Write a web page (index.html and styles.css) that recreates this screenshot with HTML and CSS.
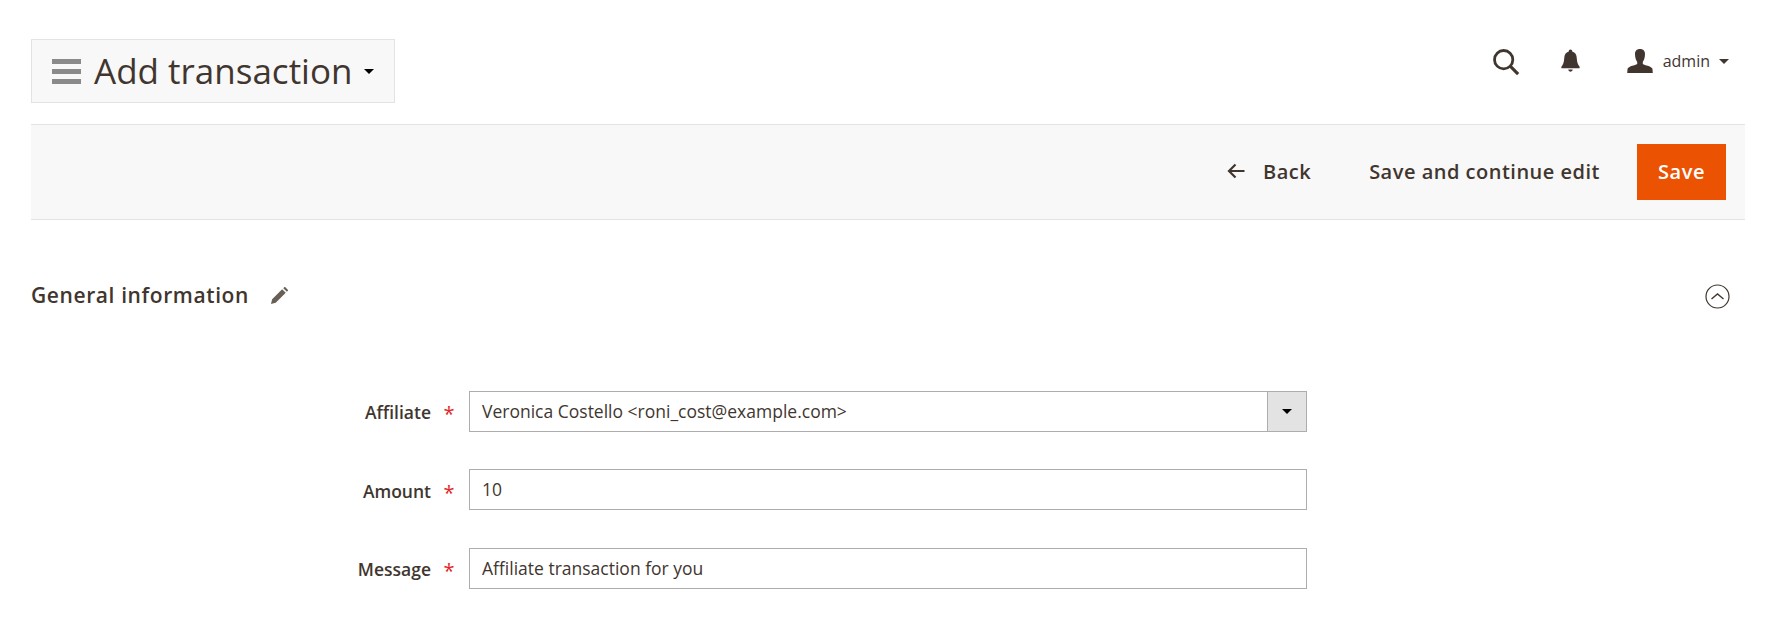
FILE: index.html
```html
<!DOCTYPE html>
<html lang="en">
<head>
  <meta charset="UTF-8">
  <meta name="viewport" content="width=device-width, initial-scale=1">
  <title>Add transaction</title>
  <link rel="stylesheet" href="styles.css">
</head>
<body>

<header class="page-header">
  <div class="title-box">
    <span class="menu-icon"><i></i><i></i><i></i></span>
    <h1>Add transaction</h1>
    <span class="caret caret-title"></span>
  </div>
  <div class="header-actions">
    <svg class="icon-search" width="28" height="28" viewBox="0 0 30 30">
      <circle cx="12.5" cy="12.5" r="9.8" fill="none" stroke="#41362f" stroke-width="3"/>
      <path d="M19.5 19.5 L28 28" stroke="#41362f" stroke-width="3.4" fill="none"/>
    </svg>
    <svg class="icon-bell" width="19" height="24" viewBox="0 0 20 24">
      <path d="M10 0 C11.2 0 11.8 .8 11.8 2 C15 2.8 16.4 5.4 16.6 9 C16.8 13 17.6 15.6 19.6 18 L19.6 19.5 L.4 19.5 L.4 18 C2.4 15.6 3.2 13 3.4 9 C3.6 5.4 5 2.8 8.2 2 C8.2 .8 8.8 0 10 0 Z" fill="#41362f"/>
      <path d="M7.6 21 H12.4 C12 22.6 11.2 23.2 10 23.2 C8.8 23.2 8 22.6 7.6 21 Z" fill="#41362f"/>
    </svg>
    <div class="user">
      <svg class="icon-user" width="26" height="24" viewBox="0 0 26 24">
        <path d="M13 0 C16.6 0 18 2.2 18 5 C18 8.6 17 11.4 15.8 12.8 L15.8 15 C18 16.4 23.8 17 25.4 19.6 L25.8 24 L.2 24 L.6 19.6 C2.2 17 8 16.4 10.2 15 L10.2 12.8 C9 11.4 8 8.6 8 5 C8 2.2 9.4 0 13 0 Z" fill="#41362f"/>
      </svg>
      <span class="user-name">admin</span>
      <span class="caret caret-user"></span>
    </div>
  </div>
</header>

<div class="toolbar">
  <a class="toolbar-link back-link">
    <svg width="18" height="16" viewBox="0 0 18 16">
      <path d="M17.5 8 H2 M8.5 1.5 L2 8 L8.5 14.5" fill="none" stroke="#41362f" stroke-width="2.2"/>
    </svg>
    Back
  </a>
  <a class="toolbar-link">Save and continue edit</a>
  <button class="save-btn">Save</button>
</div>

<section class="section">
  <div class="section-head">
    <div class="section-title">
      <h2>General information</h2>
      <svg width="17" height="17" viewBox="0 0 18 18">
        <path d="M0 18 L1.2 13 L11.8 2.4 L15.6 6.2 L5 16.8 Z M13 1.2 L14 .2 C14.4 -.1 14.8 -.1 15.2 .2 L17.8 2.8 C18.1 3.2 18.1 3.6 17.8 4 L16.8 5 Z" fill="#676056"/>
      </svg>
    </div>
    <svg class="collapse-icon" width="25" height="25" viewBox="0 0 25 25">
      <circle cx="12.5" cy="12.5" r="11.5" fill="none" stroke="#41362f" stroke-width="1.2"/>
      <path d="M6.5 15 L12.5 10 L18.5 15" fill="none" stroke="#41362f" stroke-width="1.4"/>
    </svg>
  </div>

  <form class="form">
    <div class="field">
      <label>Affiliate</label>
      <span class="required">*</span>
      <div class="select">
        <span class="select-value">Veronica Costello &lt;roni_cost@example.com&gt;</span>
        <span class="select-btn"><span class="caret caret-select"></span></span>
      </div>
    </div>
    <div class="field">
      <label>Amount</label>
      <span class="required">*</span>
      <input type="text" value="10">
    </div>
    <div class="field">
      <label>Message</label>
      <span class="required">*</span>
      <input type="text" value="Affiliate transaction for you">
    </div>
  </form>
</section>

</body>
</html>
```

FILE: styles.css
```css
body {
  font-family: "Open Sans", sans-serif;
  margin: 0;
  padding: 0 30px 0 31px;
  color: #41362f;
  background: #fff;
}

h1, h2 {
  margin: 0;
}

.page-header {
  display: flex;
  justify-content: space-between;
  align-items: flex-start;
  padding-top: 39px;
  margin-bottom: 21px;
}

.title-box {
  display: flex;
  align-items: center;
  box-sizing: border-box;
  width: 364px;
  height: 64px;
  padding-left: 20px;
  background: #f8f8f8;
  border: 1px solid #e3e3e3;
}

.title-box h1 {
  font-size: 35px;
  font-weight: 400;
  line-height: 1;
  margin: 0 0 2px 13px;
}

.menu-icon {
  display: flex;
  flex-direction: column;
  gap: 5px;
  width: 29px;
}

.menu-icon i {
  display: block;
  height: 5px;
  background: #8a8a8a;
}

.caret {
  display: block;
  width: 0;
  height: 0;
  border-left: 5px solid transparent;
  border-right: 5px solid transparent;
  border-top: 5px solid #000;
}

.caret-title {
  margin-left: 12px;
}

.header-actions {
  display: flex;
  align-items: center;
  padding-top: 7px;
  padding-right: 16px;
}

.icon-search {
  margin-top: 2px;
}

.icon-bell {
  margin-left: 41px;
}

.user {
  display: flex;
  align-items: center;
  margin-left: 47px;
}

.user-name {
  font-size: 16px;
  margin-left: 10px;
}

.caret-user {
  margin-left: 9px;
  border-top-color: #41362f;
}

.toolbar {
  display: flex;
  justify-content: flex-end;
  align-items: center;
  box-sizing: border-box;
  height: 96px;
  padding-right: 19px;
  background: #f8f8f8;
  border-top: 1px solid #e3e3e3;
  border-bottom: 1px solid #e3e3e3;
}

.toolbar-link {
  display: flex;
  align-items: center;
  font-size: 20px;
  font-weight: 600;
  letter-spacing: .5px;
  margin-right: 37px;
  padding-bottom: 2px;
}

.back-link {
  margin-right: 58px;
}

.back-link svg {
  margin-right: 18px;
}

.save-btn {
  width: 89px;
  height: 56px;
  padding: 0 0 2px;
  border: 0;
  background: #eb5202;
  color: #fff;
  font-family: inherit;
  font-size: 20px;
  font-weight: 600;
  letter-spacing: .5px;
}

.section-head {
  display: flex;
  justify-content: space-between;
  align-items: center;
  padding: 60px 15px 0 0;
}

.section-title {
  display: flex;
  align-items: center;
}

.section-title h2 {
  font-size: 21px;
  font-weight: 600;
  letter-spacing: .6px;
  line-height: 30px;
}

.section-title svg {
  margin-left: 22px;
}

.collapse-icon {
  margin-top: 3px;
}

.form {
  padding-top: 80.5px;
}

.field {
  display: flex;
  align-items: center;
  margin-bottom: 37.5px;
}

.field label {
  box-sizing: border-box;
  width: 400px;
  padding-top: 2px;
  text-align: right;
  font-size: 17.5px;
  font-weight: 600;
}

.required {
  box-sizing: border-box;
  width: 38px;
  padding: 6px 2px 0 0;
  text-align: center;
  color: #e22626;
  font-size: 20px;
  line-height: 1;
}

input, .select {
  box-sizing: border-box;
  width: 838px;
  height: 41px;
  border: 1px solid #adadad;
  background: #fff;
  color: #41362f;
  font-family: inherit;
  font-size: 17.5px;
}

input {
  padding: 0 12px 1px;
}

.select {
  display: flex;
  align-items: center;
  justify-content: space-between;
}

.select-value {
  padding-left: 12px;
}

.select-btn {
  display: flex;
  align-items: center;
  justify-content: center;
  width: 40px;
  height: 41px;
  margin-right: -1px;
  box-sizing: border-box;
  background: #e3e3e3;
  border: 1px solid #adadad;
}
```
